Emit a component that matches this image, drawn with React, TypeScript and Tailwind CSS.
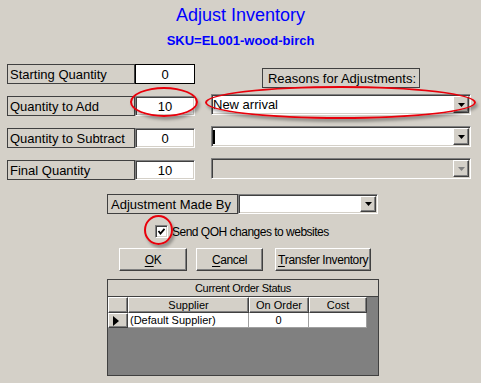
import React from 'react';

const sunken =
  'border border-t-[#808080] border-l-[#808080] border-r-white border-b-white shadow-[inset_1px_1px_0_#404040,inset_-1px_-1px_0_#d4d0c8]';
const raised =
  'border border-t-white border-l-white border-r-[#404040] border-b-[#404040] shadow-[inset_-1px_-1px_0_#808080]';

function LabelBox({ text, className = '' }: { text: string; className?: string }) {
  return (
    <div className={`flex h-full items-center border border-[#404040] pl-[2px] text-[13px] leading-none ${className}`}>
      {text}
    </div>
  );
}

function DropArrow({ disabled }: { disabled?: boolean }) {
  return (
    <div className={`flex h-full w-[16px] shrink-0 items-center justify-center bg-[#d4d0c8] ${raised}`}>
      <svg width="7" height="4" viewBox="0 0 7 4">
        <polygon points="0,0 7,0 3.5,4" fill={disabled ? '#808080' : '#000'} />
      </svg>
    </div>
  );
}

function Combo({ value, caret, disabled, className = '' }: { value?: string; caret?: boolean; disabled?: boolean; className?: string }) {
  return (
    <div className={`flex ${sunken} ${disabled ? 'bg-[#d4d0c8]' : 'bg-white'} ${className}`}>
      <div className="flex flex-1 items-center pl-[1px] text-[13px] leading-none">
        {caret && <div className="h-[14px] w-[2px] bg-black" />}
        {value}
      </div>
      <div className="py-[1px] pr-[1px]">
        <DropArrow disabled={disabled} />
      </div>
    </div>
  );
}

function QtyRow({ label, value, flat }: { label: string; value: string; flat?: boolean }) {
  return (
    <div className="flex h-5">
      <LabelBox text={label} className="w-[128px]" />
      <div
        className={`flex w-[60px] items-center justify-center bg-white text-[13px] leading-none ${
          flat ? 'border border-black' : sunken
        }`}
      >
        {value}
      </div>
    </div>
  );
}

function Ellipse({ className }: { className: string }) {
  return (
    <div
      className={`pointer-events-none absolute rounded-[50%] border-2 border-[#e8000b] shadow-[2px_3px_3px_rgba(0,0,0,0.3)] ${className}`}
    />
  );
}

function Btn({ u, rest, className }: { u: string; rest: string; className: string }) {
  return (
    <button className={`flex h-[23px] items-center justify-center bg-[#d4d0c8] text-[12px] tracking-[-0.4px] ${raised} ${className}`}>
      <span className="underline underline-offset-2">{u}</span>
      {rest}
    </button>
  );
}

export default function App() {
  return (
    <div className="relative h-[383px] w-[481px] overflow-hidden bg-[#d4d0c8] font-['Liberation_Sans',Arial,sans-serif] text-black">
      <h1 className="pt-1 text-center text-[18px] leading-[22px] text-[#0000ff]">Adjust Inventory</h1>
      <p className="mt-[7px] text-center text-[13px] font-bold leading-4 text-[#0000ff]">SKU=EL001-wood-birch</p>

      {/* Quantities + reasons */}
      <div className="mt-[15px] flex">
        <div className="ml-[7px] flex flex-col gap-3">
          <QtyRow label="Starting Quantity" value="0" flat />
          <QtyRow label="Quantity to Add" value="10" />
          <QtyRow label="Quantity to Subtract" value="0" />
          <QtyRow label="Final Quantity" value="10" />
        </div>
        <div className="ml-[16px] flex w-[260px] flex-col pt-[4px]">
          <div className="mx-auto h-5 w-[158px]">
            <LabelBox text="Reasons for Adjustments:" className="justify-center pl-0" />
          </div>
          <Combo value="New arrival" className="mt-[6px] h-[21px]" />
          <Combo caret className="mt-[11px] h-[21px]" />
          <Combo disabled className="mt-[11px] h-[21px]" />
        </div>
      </div>

      {/* Adjustment made by */}
      <div className="ml-[107px] mt-[14px] flex h-5">
        <LabelBox text="Adjustment Made By" className="w-[131px] pl-[3px]" />
        <Combo className="w-[140px]" />
      </div>

      {/* Checkbox */}
      <div className="ml-[155px] mt-[11px] flex h-[13px] items-center">
        <div className={`flex h-[13px] w-[13px] items-center justify-center bg-white ${sunken}`}>
          <svg width="9" height="9" viewBox="0 0 9 9">
            <path d="M1.5 4 L3.5 6.5 L7.5 1.8" stroke="#000" strokeWidth="1.8" fill="none" />
          </svg>
        </div>
        <span className="ml-[4px] text-[12px] tracking-[-0.5px]">Send QOH changes to websites</span>
      </div>

      {/* Buttons */}
      <div className="ml-[119px] mt-[10px] flex">
        <Btn u="O" rest="K" className="w-[68px]" />
        <Btn u="C" rest="ancel" className="ml-[9px] w-[67px]" />
        <Btn u="T" rest="ransfer Inventory" className="ml-[12px] w-[96px]" />
      </div>

      {/* Order status grid */}
      <div className="ml-[107px] mt-[8px] flex h-[97px] w-[272px] flex-col border border-[#404040] bg-[#808080] text-[11px] leading-none">
        <div className="flex h-[17px] shrink-0 items-center justify-center border-b border-[#404040] bg-[#d4d0c8] tracking-[-0.3px]">
          Current Order Status
        </div>
        <div className="flex h-[16px] shrink-0">
          <div className={`w-[20px] bg-[#d4d0c8] ${raised}`} />
          <div className={`flex w-[121px] items-center justify-center bg-[#d4d0c8] ${raised}`}>Supplier</div>
          <div className={`flex w-[60px] items-center justify-center bg-[#d4d0c8] ${raised}`}>On Order</div>
          <div className={`flex w-[58px] items-center justify-center bg-[#d4d0c8] ${raised}`}>Cost</div>
        </div>
        <div className="flex h-[15px] shrink-0">
          <div className={`flex w-[20px] items-center pl-[4px] bg-[#d4d0c8] ${raised}`}>
            <svg width="6" height="10" viewBox="0 0 6 10">
              <polygon points="0,0 6,5 0,10" fill="#000" />
            </svg>
          </div>
          <div className="flex w-[121px] items-center border-r border-b border-[#a0a0a0] bg-white pl-[2px]">(Default Supplier)</div>
          <div className="flex w-[60px] items-center justify-center border-r border-b border-[#a0a0a0] bg-white">0</div>
          <div className="w-[58px] border-r border-b border-[#a0a0a0] bg-white" />
        </div>
      </div>

      <Ellipse className="left-[130px] top-[87px] h-[30px] w-[68px]" />
      <Ellipse className="left-[205px] top-[86px] h-[33px] w-[271px]" />
      <Ellipse className="left-[144px] top-[215px] h-[30px] w-[29px]" />
    </div>
  );
}
